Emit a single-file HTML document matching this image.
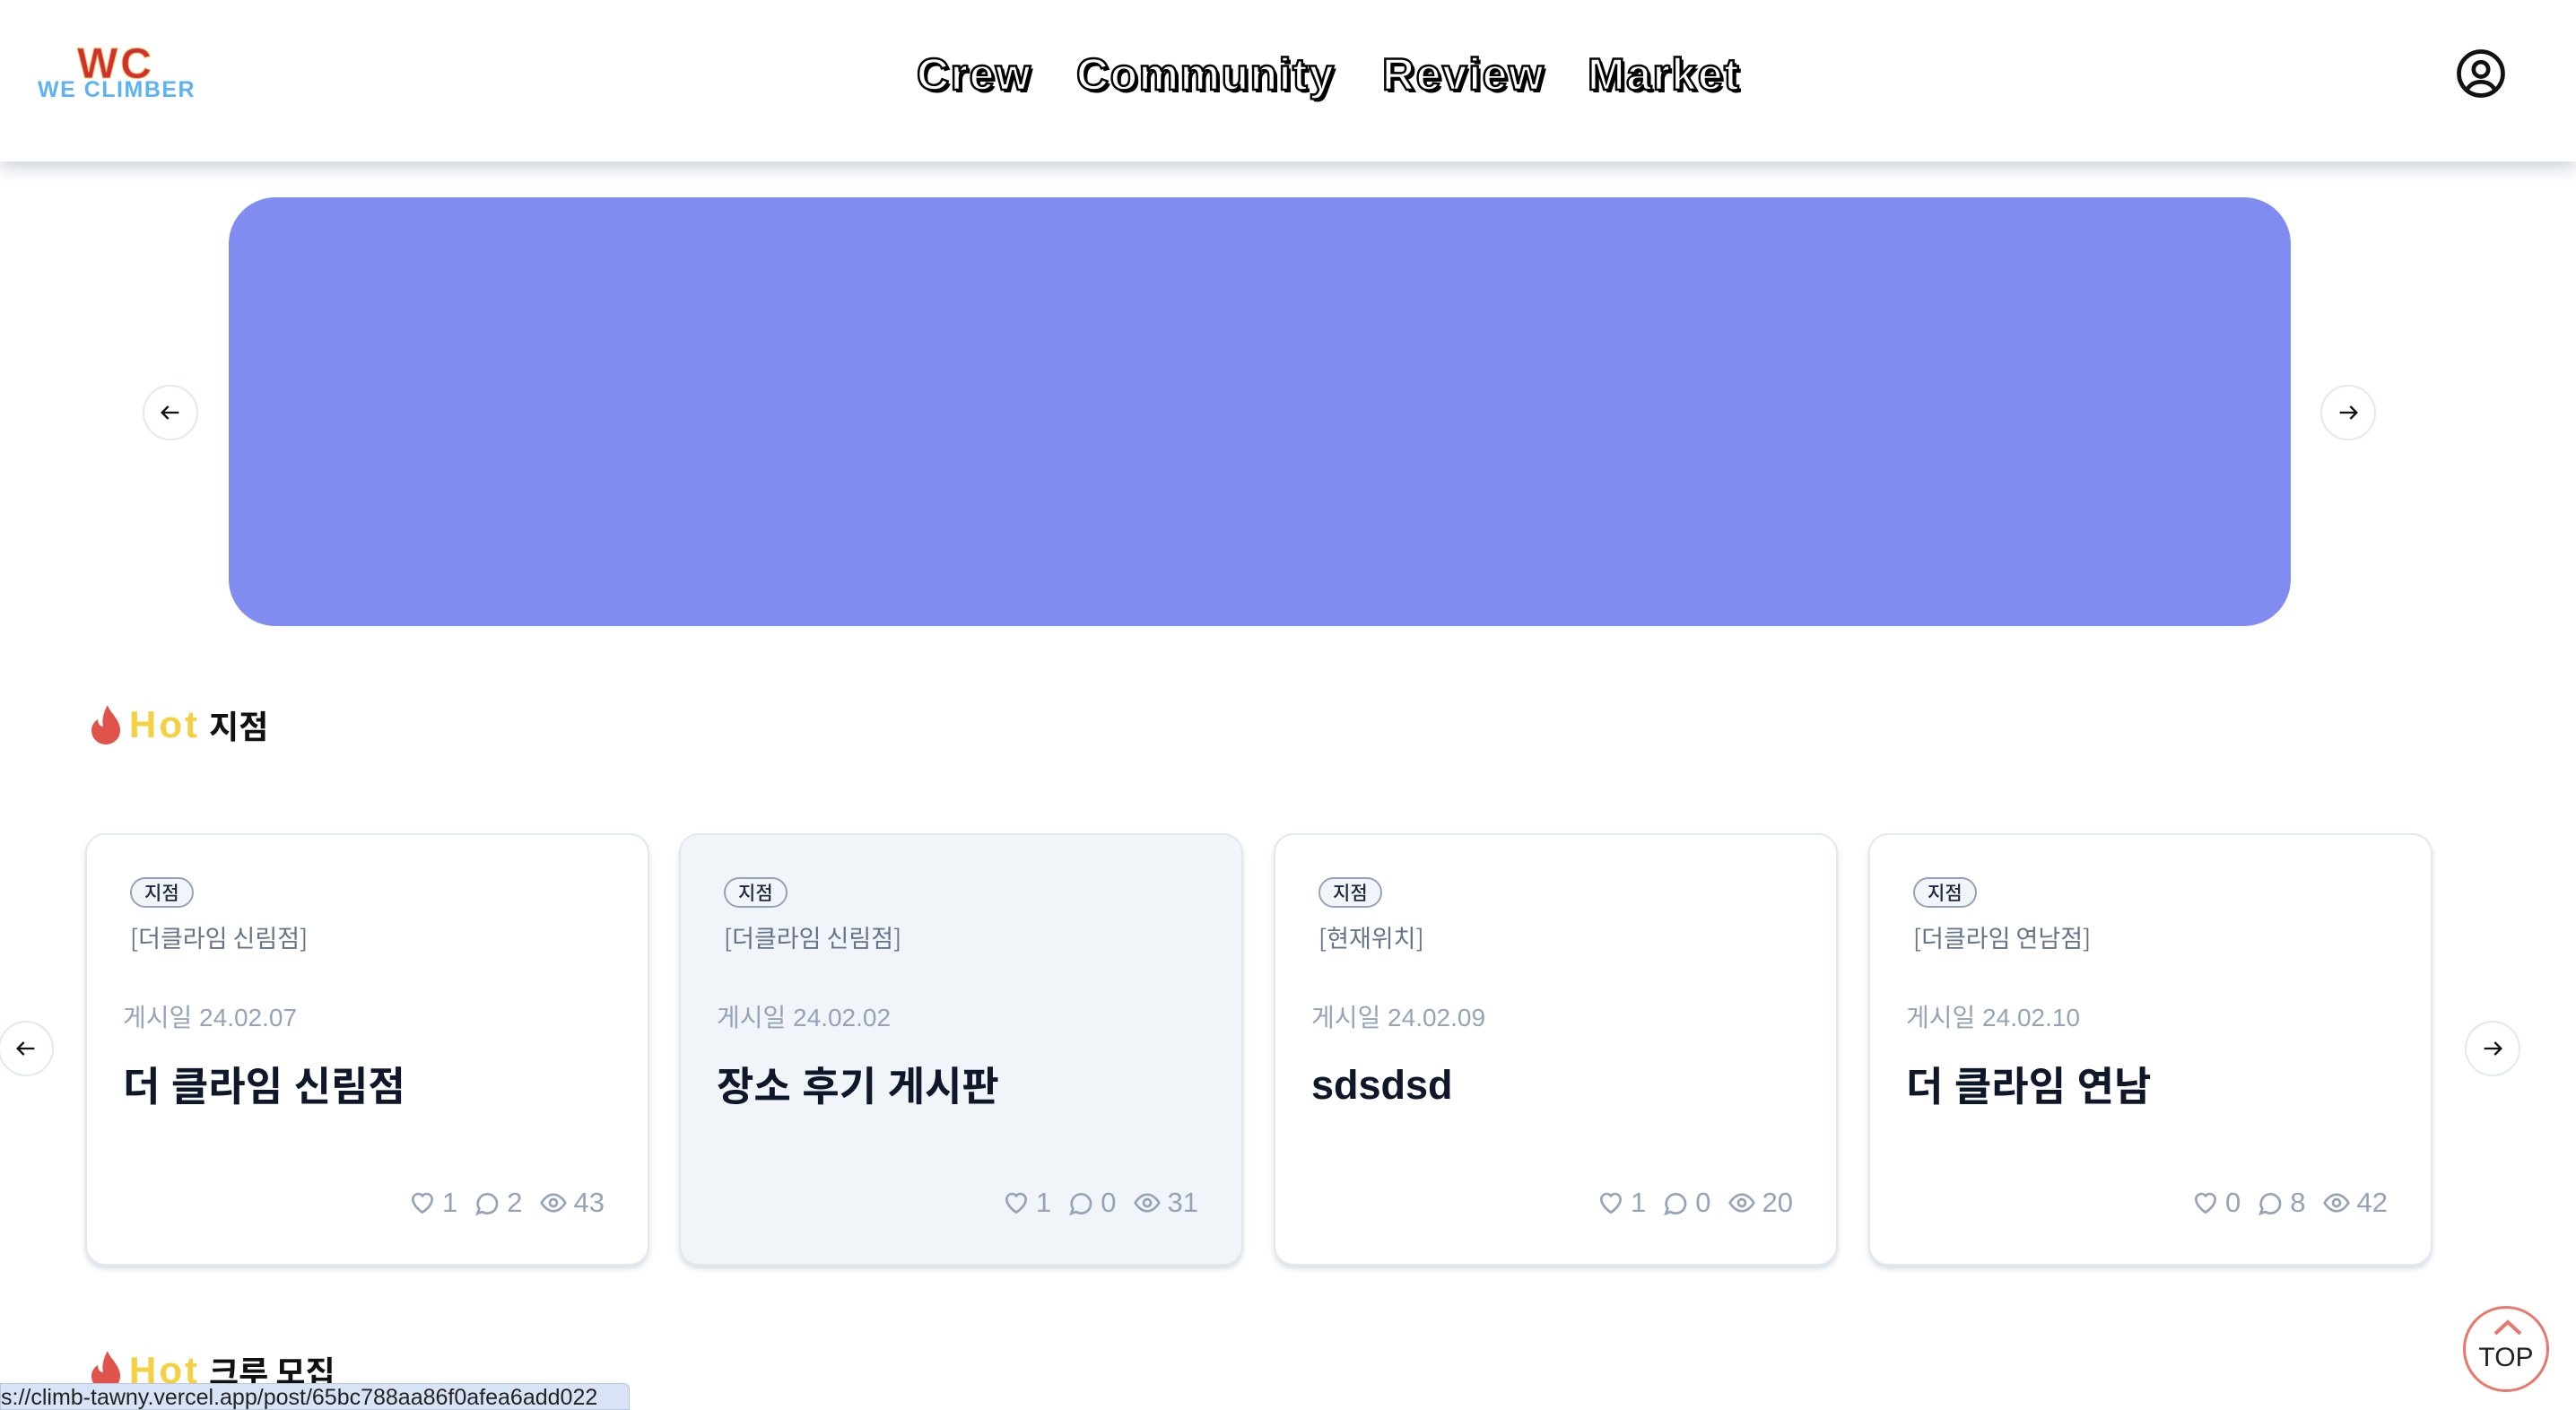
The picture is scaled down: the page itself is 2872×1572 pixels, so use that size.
<!DOCTYPE html>
<html><head><meta charset="utf-8">
<style>
*{margin:0;padding:0;box-sizing:border-box}
body{width:2872px;height:1570px;overflow:hidden;background:#fff;font-family:"Liberation Sans","Noto Sans CJK KR",sans-serif;position:relative}
.hdr{position:absolute;left:0;top:0;width:2872px;height:180px;background:#fff;box-shadow:0 6px 18px rgba(100,116,139,.35);z-index:2}
.wc{position:absolute;left:86px;top:44px;font:900 48px "Liberation Sans",sans-serif;color:#d32f2f;letter-spacing:3px;-webkit-text-stroke:1px #e8c060}
.wcl{position:absolute;left:42px;top:86px;font:900 25px "Liberation Sans",sans-serif;color:#5fb2f0;letter-spacing:1.5px;white-space:nowrap}
.nav{position:absolute;top:54px;font:900 50px "Liberation Sans",sans-serif;color:#fff;-webkit-text-stroke:2.5px #000;text-shadow:3px 3px 0 #000;letter-spacing:1.5px;white-space:nowrap}
.banner{position:absolute;left:255px;top:220px;width:2299px;height:478px;border-radius:52px;background:#818cf0}
.circ{position:absolute;width:62px;height:62px;border-radius:50%;border:2px solid #e2e8f0;background:#fff;display:flex;align-items:center;justify-content:center}
.h2{position:absolute;left:100px;display:flex;align-items:center;white-space:nowrap}
.hot{font:900 42px "Liberation Sans",sans-serif;color:#f5d040;margin-left:8px;letter-spacing:3px}
.h2k{font:700 36px "Noto Sans CJK KR",sans-serif;color:#111;margin-left:10px}
.card{position:absolute;top:929px;width:629px;height:482px;border:2px solid #e2e8f0;border-radius:22px;background:#fff;box-shadow:0 4px 6px rgba(148,163,184,.35)}
.badge{position:absolute;left:48px;top:47px;height:34px;padding:0 14px;border:2px solid #94a3b8;border-radius:17px;background:#f1f5f9;font:500 21px "Noto Sans CJK KR",sans-serif;color:#1e293b;line-height:30px}
.loc{position:absolute;left:48px;top:94px;font:400 27px "Noto Sans CJK KR",sans-serif;color:#64748b;white-space:nowrap}
.date{position:absolute;left:40px;top:182px;font:400 28px "Liberation Sans","Noto Sans CJK KR",sans-serif;color:#94a3b8;white-space:nowrap}
.title{position:absolute;left:40px;top:244px;font:700 45px "Liberation Sans","Noto Sans CJK KR",sans-serif;color:#0f172a;white-space:nowrap}
.stats{position:absolute;right:48px;top:392px;display:flex;align-items:center;font:400 31px "Liberation Sans",sans-serif;color:#94a3b8}
.stats svg{margin-right:6px}
.stats span{margin-right:17px}
.stats span:last-child{margin-right:0}
</style></head><body>
<div class="hdr">
<div class="wc">WC</div>
<div class="wcl">WE CLIMBER</div>
<div class="nav" style="left:1022px">Crew</div>
<div class="nav" style="left:1200px">Community</div>
<div class="nav" style="left:1541px">Review</div>
<div class="nav" style="left:1770px">Market</div>
<svg style="position:absolute;left:2738px;top:54px" width="56" height="56" viewBox="0 0 24 24" fill="none" stroke="#111" stroke-width="2"><circle cx="12" cy="12" r="10.5"/><circle cx="12" cy="10" r="3.5"/><path d="M5.5 19.5c1.5-2.5 4-3.5 6.5-3.5s5 1 6.5 3.5"/></svg>
</div>
<div class="banner"></div>
<div class="circ" style="left:159px;top:429px"><svg width="28" height="28" viewBox="0 0 24 24" fill="none" stroke="#111" stroke-width="2"><path d="M20 12H4M10 6l-6 6 6 6"/></svg></div>
<div class="circ" style="left:2587px;top:429px"><svg width="28" height="28" viewBox="0 0 24 24" fill="none" stroke="#111" stroke-width="2"><path d="M4 12h16M14 6l6 6-6 6"/></svg></div>

<div class="h2" style="top:782px">
<svg width="36" height="44" viewBox="0 0 36 44"><path d="M20 0C22 8 34 16 34 28c0 9-7 16-16 16S2 37 2 28c0-6 4-10 7-12 0 5 3 8 6 8-2-8 1-17 5-24z" fill="#e0534a"/></svg>
<span class="hot">Hot</span><span class="h2k">지점</span></div>

<div class="circ" style="left:-2px;top:1138px"><svg width="28" height="28" viewBox="0 0 24 24" fill="none" stroke="#111" stroke-width="2"><path d="M20 12H4M10 6l-6 6 6 6"/></svg></div>
<div class="circ" style="left:2748px;top:1138px"><svg width="28" height="28" viewBox="0 0 24 24" fill="none" stroke="#111" stroke-width="2"><path d="M4 12h16M14 6l6 6-6 6"/></svg></div>

<div class="card" style="left:95px"><div class="badge">지점</div><div class="loc">[더클라임 신림점]</div><div class="date">게시일 24.02.07</div><div class="title">더 클라임 신림점</div>
<div class="stats"><svg width="32" height="32" viewBox="0 0 24 24" fill="none" stroke="#94a3b8" stroke-width="2"><path d="M12 20s-8-5-8-11a4.5 4.5 0 0 1 8-2.8A4.5 4.5 0 0 1 20 9c0 6-8 11-8 11z"/></svg><span>1</span><svg width="32" height="32" viewBox="0 0 24 24" fill="none" stroke="#94a3b8" stroke-width="2"><path d="M4 21l1.5-4A8 8 0 1 1 8 19.5z"/></svg><span>2</span><svg width="34" height="32" viewBox="0 0 24 24" fill="none" stroke="#94a3b8" stroke-width="2"><path d="M2 12s4-7 10-7 10 7 10 7-4 7-10 7S2 12 2 12z"/><circle cx="12" cy="12" r="3"/></svg><span>43</span></div></div>

<div class="card" style="left:757px;background:#f1f5f9"><div class="badge">지점</div><div class="loc">[더클라임 신림점]</div><div class="date">게시일 24.02.02</div><div class="title">장소 후기 게시판</div>
<div class="stats"><svg width="32" height="32" viewBox="0 0 24 24" fill="none" stroke="#94a3b8" stroke-width="2"><path d="M12 20s-8-5-8-11a4.5 4.5 0 0 1 8-2.8A4.5 4.5 0 0 1 20 9c0 6-8 11-8 11z"/></svg><span>1</span><svg width="32" height="32" viewBox="0 0 24 24" fill="none" stroke="#94a3b8" stroke-width="2"><path d="M4 21l1.5-4A8 8 0 1 1 8 19.5z"/></svg><span>0</span><svg width="34" height="32" viewBox="0 0 24 24" fill="none" stroke="#94a3b8" stroke-width="2"><path d="M2 12s4-7 10-7 10 7 10 7-4 7-10 7S2 12 2 12z"/><circle cx="12" cy="12" r="3"/></svg><span>31</span></div></div>

<div class="card" style="left:1420px"><div class="badge">지점</div><div class="loc">[현재위치]</div><div class="date">게시일 24.02.09</div><div class="title" style="top:253px">sdsdsd</div>
<div class="stats"><svg width="32" height="32" viewBox="0 0 24 24" fill="none" stroke="#94a3b8" stroke-width="2"><path d="M12 20s-8-5-8-11a4.5 4.5 0 0 1 8-2.8A4.5 4.5 0 0 1 20 9c0 6-8 11-8 11z"/></svg><span>1</span><svg width="32" height="32" viewBox="0 0 24 24" fill="none" stroke="#94a3b8" stroke-width="2"><path d="M4 21l1.5-4A8 8 0 1 1 8 19.5z"/></svg><span>0</span><svg width="34" height="32" viewBox="0 0 24 24" fill="none" stroke="#94a3b8" stroke-width="2"><path d="M2 12s4-7 10-7 10 7 10 7-4 7-10 7S2 12 2 12z"/><circle cx="12" cy="12" r="3"/></svg><span>20</span></div></div>

<div class="card" style="left:2083px"><div class="badge">지점</div><div class="loc">[더클라임 연남점]</div><div class="date">게시일 24.02.10</div><div class="title">더 클라임 연남</div>
<div class="stats"><svg width="32" height="32" viewBox="0 0 24 24" fill="none" stroke="#94a3b8" stroke-width="2"><path d="M12 20s-8-5-8-11a4.5 4.5 0 0 1 8-2.8A4.5 4.5 0 0 1 20 9c0 6-8 11-8 11z"/></svg><span>0</span><svg width="32" height="32" viewBox="0 0 24 24" fill="none" stroke="#94a3b8" stroke-width="2"><path d="M4 21l1.5-4A8 8 0 1 1 8 19.5z"/></svg><span>8</span><svg width="34" height="32" viewBox="0 0 24 24" fill="none" stroke="#94a3b8" stroke-width="2"><path d="M2 12s4-7 10-7 10 7 10 7-4 7-10 7S2 12 2 12z"/><circle cx="12" cy="12" r="3"/></svg><span>42</span></div></div>

<div class="h2" style="top:1502px">
<svg width="36" height="44" viewBox="0 0 36 44"><path d="M20 0C22 8 34 16 34 28c0 9-7 16-16 16S2 37 2 28c0-6 4-10 7-12 0 5 3 8 6 8-2-8 1-17 5-24z" fill="#e0534a"/></svg>
<span class="hot">Hot</span><span class="h2k">크루 모집</span></div>

<div style="position:absolute;left:2746px;top:1456px;width:96px;height:96px;border-radius:50%;border:3px solid #e8776e;background:#fff;text-align:center">
<svg style="position:absolute;left:31px;top:12px" width="32" height="18" viewBox="0 0 32 18" fill="none" stroke="#e8776e" stroke-width="4"><path d="M2 16L16 3l14 13"/></svg>
<div style="position:absolute;left:0;right:0;top:38px;font:300 30px 'Liberation Sans',sans-serif;color:#222">TOP</div></div>

<div style="position:absolute;left:0;top:1542px;width:702px;height:30px;background:#d9e3f6;border:1px solid #b9c6e0;border-radius:0 6px 0 0;font:400 25px 'Liberation Sans',sans-serif;color:#222;line-height:30px;white-space:nowrap;overflow:hidden">s://climb-tawny.vercel.app/post/65bc788aa86f0afea6add022</div>
</body></html>
